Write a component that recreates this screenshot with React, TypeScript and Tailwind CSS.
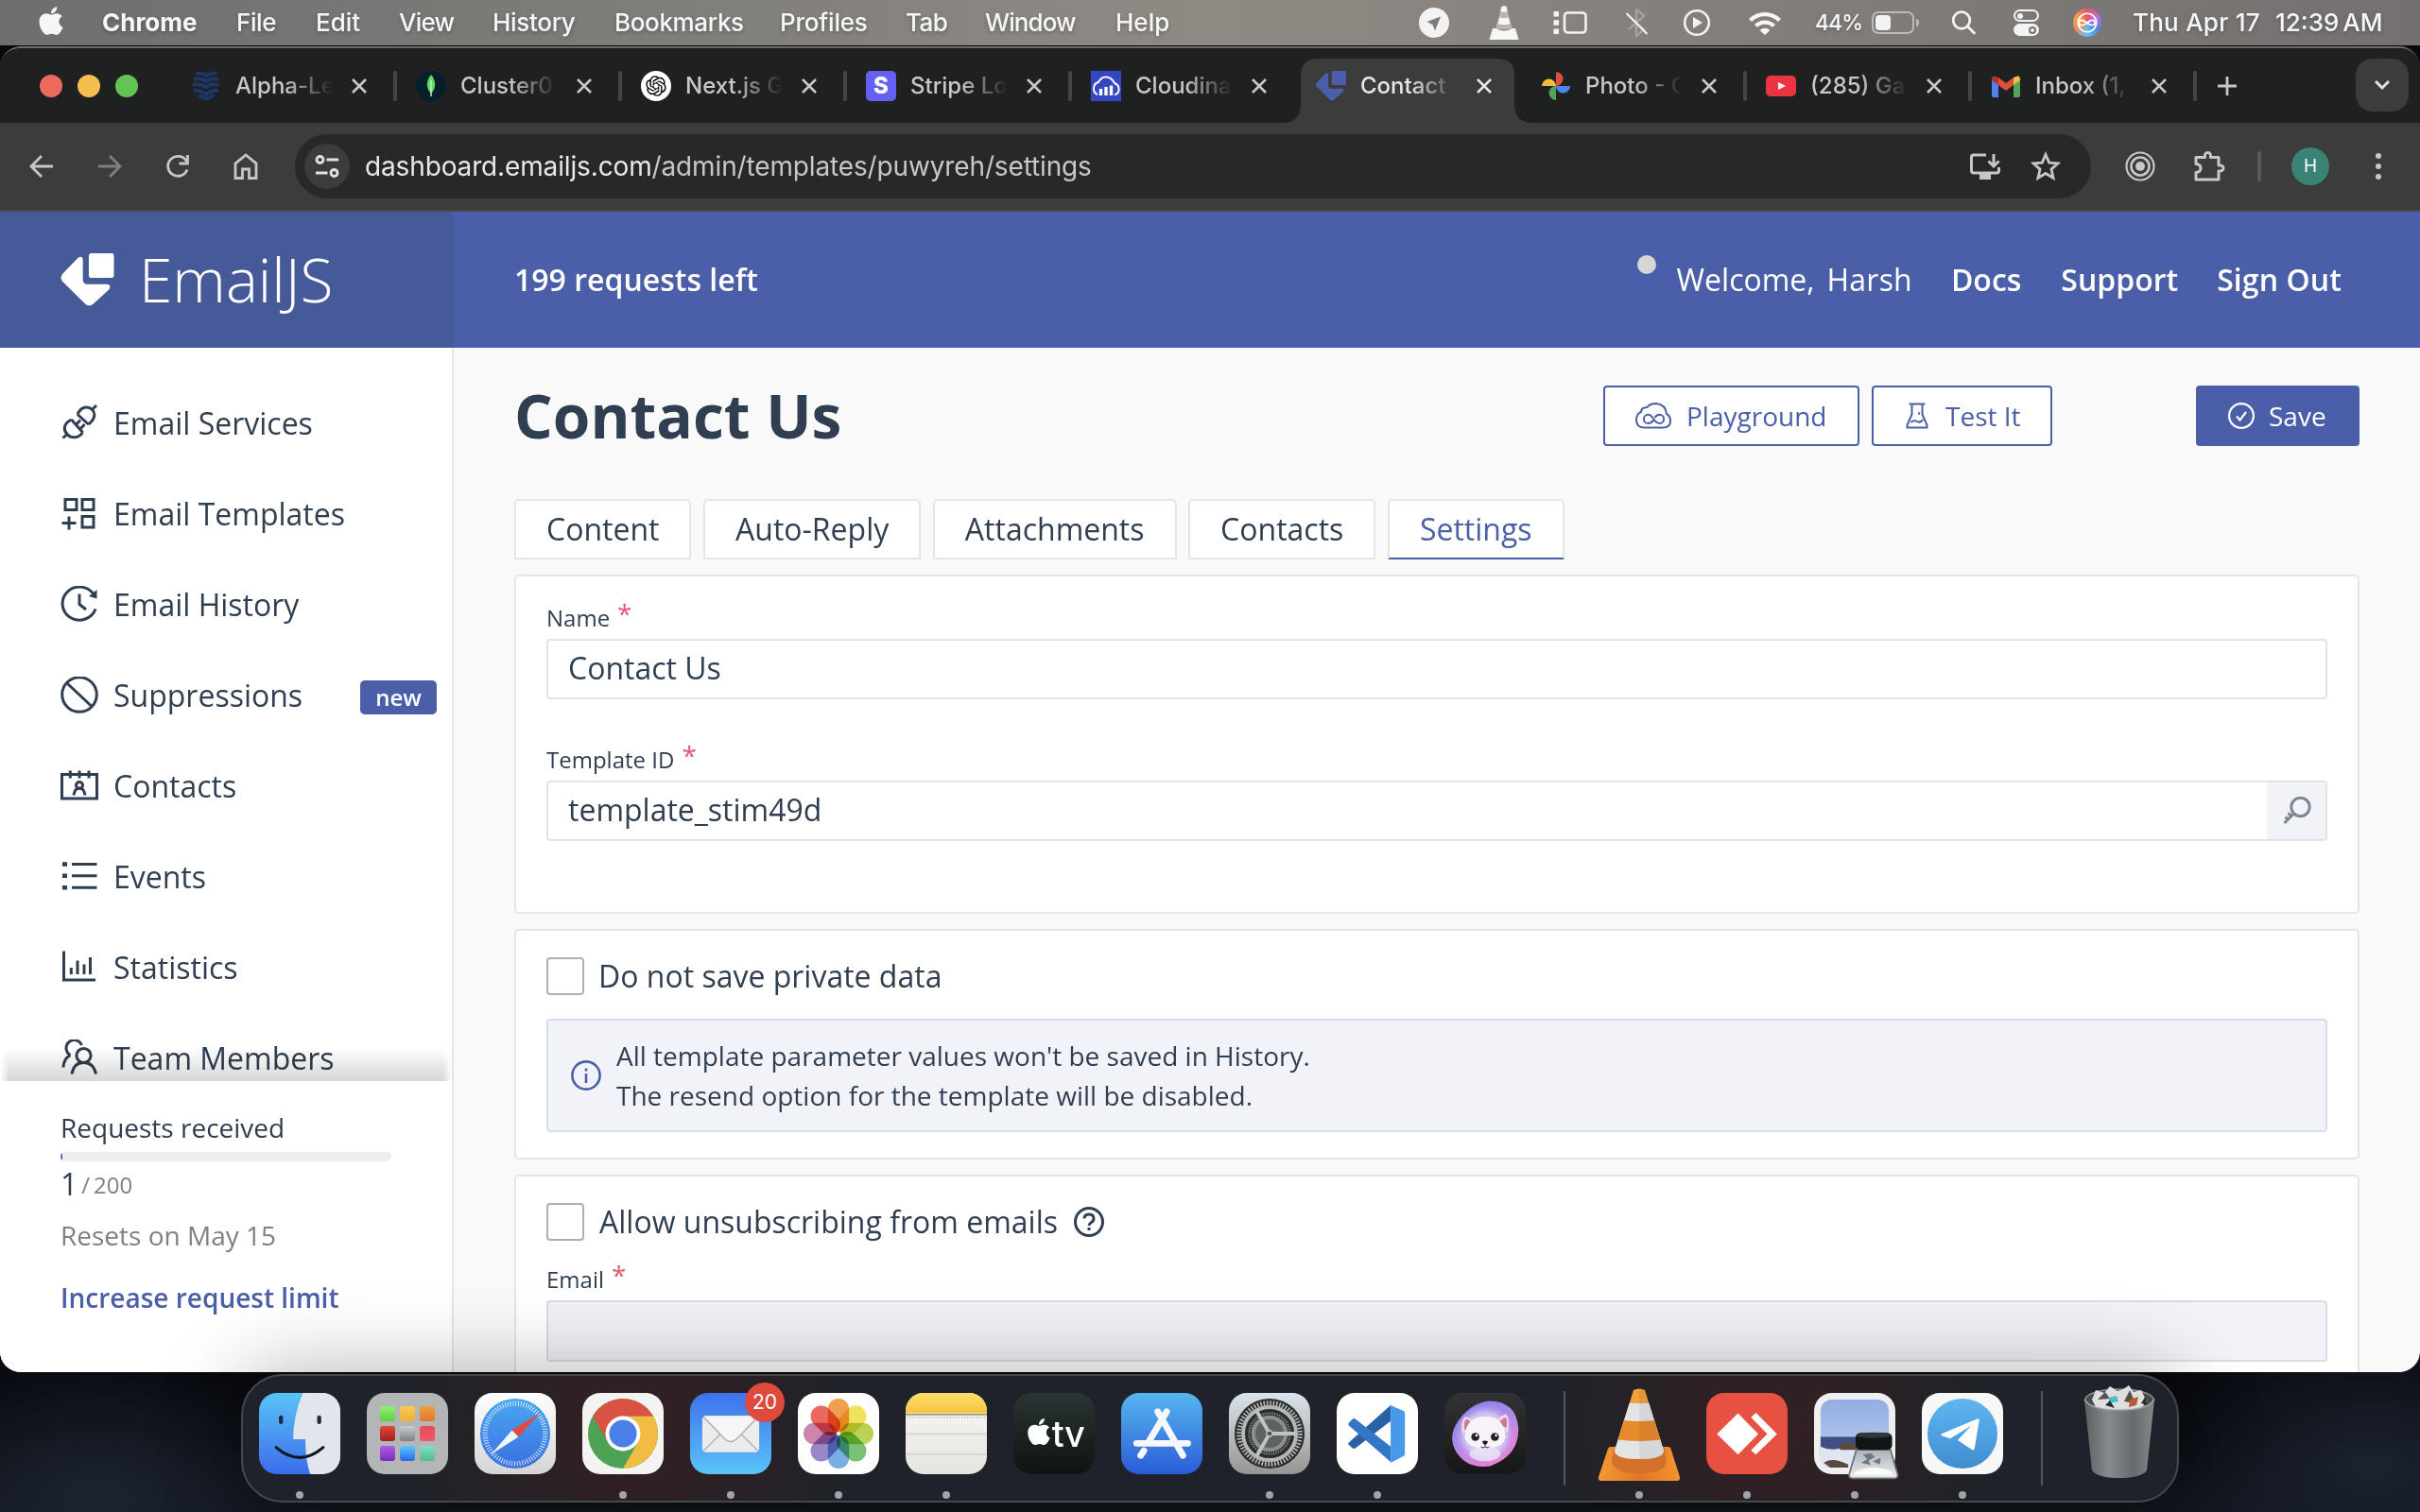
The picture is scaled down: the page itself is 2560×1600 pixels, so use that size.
import React from "react";
import type { ReactNode } from "react";
import { FaApple } from "react-icons/fa";
import { RiOpenaiFill } from "react-icons/ri";

/* ---------- macOS menu bar ---------- */

const menus = [
  { label: "Chrome", cls: "w-[142px] font-bold" },
  { label: "File", cls: "w-[84px] tracking-[-0.4px]" },
  { label: "Edit", cls: "w-[88px]" },
  { label: "View", cls: "w-[99px] tracking-[-0.8px]" },
  { label: "History", cls: "w-[129px] tracking-[-0.3px]" },
  { label: "Bookmarks", cls: "w-[175px] tracking-[-0.35px]" },
  { label: "Profiles", cls: "w-[133px] tracking-[-0.2px]" },
  { label: "Tab", cls: "w-[84px] tracking-[-0.5px]" },
  { label: "Window", cls: "w-[138px] tracking-[-0.9px]" },
  { label: "Help", cls: "w-[80px]" },
];

function MenuBar() {
  return (
    <header className="flex h-[48px] shrink-0 items-center bg-linear-to-r from-[#6c6f6e] via-[#908a84] to-[#73706f] font-['Inter',sans-serif] text-[26px] leading-[48px] font-medium text-[#f6f6f6] [text-shadow:0_2px_4px_rgba(0,0,0,0.25)]">
      <div className="flex w-[108px] justify-center pb-1">
        <FaApple className="size-[34px]" />
      </div>
      {menus.map((m) => (
        <span key={m.label} className={`shrink-0 pb-px whitespace-nowrap ${m.cls}`}>
          {m.label}
        </span>
      ))}
      <div className="ml-auto flex h-full items-center">
        <div className="flex w-[74px] justify-center">
          <svg className="size-[32px]" viewBox="0 0 32 32">
            <circle cx="16" cy="16" r="16" fill="#f3f3f3" />
            <path d="M23 9.500 8.500 15l6 3.200 2.600 6.300z" fill="#817c77" />
          </svg>
        </div>
        <div className="flex w-[74px] justify-center">
          <svg className="h-[36px] w-[32px]" viewBox="0 0 32 36">
            <path d="M13.500 1q2.500-1.500 5 0L25 25H7z" fill="#b9b5b1" />
            <path d="M13.500 1q2.500-1.500 5 0l1.300 5q-3.800 1.500-7.600 0zM11.300 12.500q4.700 1.600 9.400 0l1.700 6.500q-6.400 2.500-12.800 0zM4 24h3q9 5 18 0h3l3.500 12H.5z" fill="#f6f6f6" />
          </svg>
        </div>
        <div className="flex w-[66px] justify-center">
          <svg className="h-[24px] w-[36px]" viewBox="0 0 36 24">
            <rect x="12" y="1.500" width="22.500" height="21" rx="3.500" fill="none" stroke="#f3f3f3" strokeWidth="2.600" />
            <path d="M.5 0h5.500v5.500H.5zM.5 9.200h5.500v5.500H.5zM.5 18.500h5.500V24H.5z" fill="#f3f3f3" />
          </svg>
        </div>
        <div className="flex w-[74px] justify-center">
          <svg className="h-[30px] w-[24px]" viewBox="0 0 24 30" fill="none">
            <path d="M4 8l16 14-8 7V1l8 7L4 22" stroke="#a8a49f" strokeWidth="2.200" />
            <path d="M1.500 5l22 22" stroke="#f3f3f3" strokeWidth="2.200" />
          </svg>
        </div>
        <div className="flex w-[54px] justify-center">
          <svg className="size-[30px]" viewBox="0 0 30 30">
            <circle cx="15" cy="15" r="12.800" fill="none" stroke="#f3f3f3" strokeWidth="2.600" />
            <path d="M11 9v12l10-6z" fill="#f3f3f3" />
          </svg>
        </div>
        <div className="flex w-[90px] justify-center pb-px">
          <svg className="h-[26px] w-[36px]" viewBox="0 0 36 26" fill="none" stroke="#f6f6f6" strokeWidth="4.400">
            <path d="M2.500 10.500a22 22 0 0 1 31 0" />
            <path d="M8.500 16.500a13.500 13.500 0 0 1 19 0" />
            <path d="M12.500 21l5.500 5 5.500-5q-5.500-4.500-11 0z" fill="#f6f6f6" stroke="none" />
          </svg>
        </div>
        <span className="ml-[8px] w-[60px] text-[23px] tracking-[-1px] whitespace-nowrap">44%</span>
        <div className="flex w-[50px] items-center">
          <div className="flex h-[24px] w-[45px] items-center rounded-[7px] border-2 border-[#bdb9b6] pl-[2px]">
            <div className="h-[16px] w-[16px] rounded-[4px] bg-[#f3f3f3]" />
          </div>
          <div className="ml-[2px] h-[8px] w-[3px] rounded-r bg-[#bdb9b6]" />
        </div>
        <div className="flex w-[94px] justify-center">
          <svg className="size-[26px]" viewBox="0 0 26 26" fill="none" stroke="#f3f3f3" strokeWidth="2.800" strokeLinecap="round">
            <circle cx="11" cy="10.500" r="8.800" />
            <path d="M17.500 17l7 7" />
          </svg>
        </div>
        <div className="flex w-[38px] flex-col items-center gap-[2px]">
          <div className="flex h-[13px] w-[27px] items-center rounded-full border-2 border-[#f3f3f3] pl-[2px]">
            <div className="size-[6px] rounded-full bg-[#f3f3f3]" />
          </div>
          <div className="flex h-[13px] w-[27px] items-center justify-end rounded-full bg-[#f3f3f3] pr-[3px]">
            <div className="size-[8px] rounded-full border-2 border-[#77736f]" />
          </div>
        </div>
        <div className="flex w-[92px] justify-center">
          <div className="flex size-[30px] items-center justify-center rounded-full bg-[conic-gradient(#e8506a,#c46bd8,#4f7fe8,#59c6ee,#f08a5a,#f2a050,#e8506a)]">
            <svg className="size-[26px]" viewBox="0 0 24 24" fill="none" stroke="#fff" strokeWidth="1.600">
              <circle cx="12" cy="12" r="9" />
              <path d="M6 9.500c4 0 7 5 11 5a2.500 2.500 0 0 0 0-5c-4 0-6 5-10 5a2.500 2.500 0 0 1-1-5z" />
            </svg>
          </div>
        </div>
        <span className="ml-[2px] w-[151px] tracking-[0.25px] whitespace-nowrap">Thu Apr 17</span>
        <span className="w-[153px] whitespace-nowrap [word-spacing:-3px]">12:39 AM</span>
      </div>
    </header>
  );
}

/* ---------- Browser tabs ---------- */

const EmailJsMark = ({ className }: { className: string }) => (
  <svg className={className} viewBox="0 0 58 58" fill="currentColor">
    <path d="M33.500 0h22q2.500 0 2.500 2.500v22q0 2.500-2.500 2.500h-22q-3 0-3-3V3q0-3 3-3z" />
    <path d="M18.500 5.200q5-3.500 5.500 1.800v22.500q.5 4 4.500 4.500h21.500q5.500.5 2.800 5.500L35.500 55.500q-4.500 4-9 0L1.800 31q-3.600-4.500 0-8.500z" />
  </svg>
);

const AlphaIcon = () => (
  <svg className="h-[30px] w-[32px]" viewBox="0 0 32 30" fill="none" stroke="#1d3766" strokeWidth="4">
    <path d="M5 2q5-2 11 2 6-4 11-2M3 8q7-2 13 2 6-4 13-2M2 14q8-2 14 2 6-4 14-2M3 20q7-1 13 4 6-5 13-4M8 25l8 4 8-4" />
  </svg>
);
const LeafIcon = () => (
  <div className="flex size-[32px] items-center justify-center rounded-full bg-[#061f2b]">
    <svg className="h-[24px] w-[14px]" viewBox="0 0 14 24">
      <path d="M7 0c5 6 6 14 0 20C1 14 2 6 7 0z" fill="#5fdc63" />
      <path d="M7 6v17" stroke="#b9f0c0" strokeWidth="1.500" />
    </svg>
  </div>
);
const OpenAiIcon = () => (
  <div className="flex size-[32px] items-center justify-center rounded-full bg-white">
    <RiOpenaiFill className="size-[26px] text-black" />
  </div>
);
const StripeIcon = () => (
  <div className="flex size-[32px] items-center justify-center rounded-[5px] bg-[#6460f4] text-[24px] font-extrabold text-white">S</div>
);
const CloudinaryIcon = () => (
  <div className="flex size-[32px] items-center justify-center bg-[#3448c5]">
    <svg className="h-[22px] w-[30px]" viewBox="0 0 30 22" fill="none" stroke="#fff" strokeWidth="2">
      <path d="M6 20Q1.500 18 2 13t5-6q3-6 8.500-5.500T24 8q5 2 4.500 7T24 20" />
      <path d="M9.500 14v7M15 12v9M20.500 10.500v10.500" strokeWidth="3.400" />
    </svg>
  </div>
);
const PhotosIcon = () => (
  <svg className="size-[30px]" viewBox="0 0 30 30">
    <path d="M15 0a7.500 7.500 0 0 1 0 15z" fill="#dc4f3f" />
    <path d="M30 15a7.500 7.500 0 0 1-15 0z" fill="#4f83ee" />
    <path d="M15 30a7.500 7.500 0 0 1 0-15z" fill="#53a557" />
    <path d="M0 15a7.500 7.500 0 0 1 15 0z" fill="#f2bc42" />
  </svg>
);
const YoutubeIcon = () => (
  <svg className="h-[22px] w-[32px]" viewBox="0 0 32 22">
    <rect width="32" height="22" rx="5" fill="#ea3440" />
    <path d="M13 7v8l8-4z" fill="#fff" />
  </svg>
);
const GmailIcon = () => (
  <svg className="h-[23px] w-[30px]" viewBox="0 0 30 23">
    <path d="M0 4l7 5v14H2q-2 0-2-2z" fill="#4f83ee" />
    <path d="M30 4l-7 5v14h5q2 0 2-2z" fill="#53a557" />
    <path d="M7 2l8 6 8-6v8l-8 6-8-6z" fill="#dc4f3f" />
    <path d="M0 4q0-6 7-2v8L0 5z" fill="#b93328" />
    <path d="M30 4q0-6-7-2v8l7-5z" fill="#f2bc42" />
  </svg>
);

type TabItem = { title: string; icon: ReactNode; active?: boolean; divider?: boolean };
const tabs: TabItem[] = [
  { title: "Alpha-Le", icon: <AlphaIcon />, divider: true },
  { title: "Cluster0", icon: <LeafIcon />, divider: true },
  { title: "Next.js G", icon: <OpenAiIcon />, divider: true },
  { title: "Stripe Lo", icon: <StripeIcon />, divider: true },
  { title: "Cloudina", icon: <CloudinaryIcon /> },
  { title: "Contact", icon: <EmailJsMark className="size-[32px] text-[#4a5fa7]" />, active: true },
  { title: "Photo - G", icon: <PhotosIcon />, divider: true },
  { title: "(285) Ga", icon: <YoutubeIcon />, divider: true },
  { title: "Inbox (1,", icon: <GmailIcon />, divider: true },
];

const Cross = () => (
  <svg className="size-[18px]" viewBox="0 0 18 18" stroke="currentColor" strokeWidth="2.600" fill="none">
    <path d="M2 2l14 14M16 2L2 16" />
  </svg>
);

function Tab({ title, icon, active, divider }: TabItem) {
  return (
    <div className="relative flex h-[68px] w-[238px] shrink-0 pb-[10px]">
      {active && (
        <svg className="absolute -left-[14px] top-0 h-[68px] w-[266px]" viewBox="0 0 266 68" fill="#3c3c3c">
          <path d="M0 68q20 0 20-20V18Q20 0 38 0h190q18 0 18 18v30q0 20 20 20z" />
        </svg>
      )}
      <div className="relative flex w-full items-center">
        <div className="ml-[21px] flex w-[34px] justify-center">{icon}</div>
        <span
          className={`ml-[14px] w-[105px] overflow-hidden whitespace-nowrap mask-r-from-50% mask-r-to-98% ${active ? "text-[#e6e6e6]" : "text-[#c7c8c7]"}`}
        >
          {title}
        </span>
        <div className={`ml-[17px] ${active ? "text-[#e6e6e6]" : "text-[#c7c8c7]"}`}>
          <Cross />
        </div>
        {divider && <div className="ml-auto h-[32px] w-[4px] translate-x-[2px] rounded-full bg-[#444645]" />}
      </div>
    </div>
  );
}

function TabStrip() {
  return (
    <div className="flex h-[79px] shrink-0 items-end bg-[#1f2120] text-[24px] font-medium">
      <div className="flex h-[68px] w-[180px] items-center gap-[16px] pb-[10px] pl-[42px]">
        <div className="size-[24px] rounded-full bg-[#ec6a5e]" />
        <div className="size-[24px] rounded-full bg-[#f4bf4f]" />
        <div className="size-[24px] rounded-full bg-[#61c554]" />
      </div>
      {tabs.map((t) => (
        <Tab key={t.title} {...t} />
      ))}
      <div className="flex h-[68px] w-[68px] items-center justify-center pb-[10px]">
        <svg className="size-[22px]" viewBox="0 0 22 22" stroke="#c7c8c7" strokeWidth="2.800">
          <path d="M11 1v20M1 11h20" />
        </svg>
      </div>
      <div className="mr-[12px] mb-[12px] ml-auto flex h-[56px] w-[56px] items-center justify-center rounded-[18px] bg-[#3c3c3c]">
        <svg className="h-[12px] w-[18px]" viewBox="0 0 18 12" stroke="#e3e3e3" strokeWidth="3" fill="none">
          <path d="M2 2l7 7 7-7" />
        </svg>
      </div>
    </div>
  );
}

/* ---------- Browser toolbar ---------- */

function Toolbar() {
  return (
    <div className="flex h-[94px] shrink-0 items-center border-b-2 border-[#484848] bg-[#3c3c3c] text-[#c7c7c7]">
      <div className="flex w-[88px] justify-center">
        <svg className="size-[26px]" viewBox="0 0 26 26" fill="none" stroke="currentColor" strokeWidth="2.800">
          <path d="M25 13H2.500M13 2L2 13l11 11" />
        </svg>
      </div>
      <div className="flex w-[56px] justify-center text-[#7f7f7f]">
        <svg className="size-[26px]" viewBox="0 0 26 26" fill="none" stroke="currentColor" strokeWidth="2.800">
          <path d="M1 13h22.500M13 2l11 11-11 11" />
        </svg>
      </div>
      <div className="flex w-[88px] justify-center">
        <svg className="size-[26px]" viewBox="0 0 26 26" fill="none" stroke="currentColor" strokeWidth="2.800">
          <path d="M23 16.500A10.500 10.500 0 1 1 22.500 8" />
          <path d="M23.500 1v9h-9" />
        </svg>
      </div>
      <div className="flex w-[56px] justify-center">
        <svg className="h-[28px] w-[26px]" viewBox="0 0 26 28" fill="none" stroke="currentColor" strokeWidth="2.800">
          <path d="M2 26.500V11L13 2l11 9v15.500h-7.500V17h-7v9.500z" />
        </svg>
      </div>
      <div className="ml-[24px] flex h-[68px] w-[1900px] items-center rounded-full bg-[#282828]">
        <div className="ml-[10px] flex size-[48px] items-center justify-center rounded-full bg-[#3c3c3c]">
          <svg className="size-[26px]" viewBox="0 0 26 26" fill="none" stroke="#e3e3e3" strokeWidth="2.800">
            <circle cx="5.500" cy="6" r="3.500" />
            <path d="M12.500 6H25M1 20h12.500" />
            <circle cx="20.500" cy="20" r="3.500" />
          </svg>
        </div>
        <span className="ml-[16px] text-[28px] tracking-[-0.14px] whitespace-nowrap text-[#c7c7c7]">
          <span className="text-[#e8e8e8]">dashboard.emailjs.com</span>/admin/templates/puwyreh/settings
        </span>
        <div className="mr-[32px] ml-auto flex items-center gap-[31px]">
          <svg className="h-[30px] w-[34px]" viewBox="0 0 34 30" fill="none" stroke="currentColor" strokeWidth="3">
            <path d="M18 3H5Q2.500 3 2.500 5.500v14Q2.500 22 5 22h24q2.500 0 2.500-2.500V16M26 2v12M20.500 9.500L26 15l5.500-5.500" />
            <path d="M11 26h12" strokeWidth="6" />
          </svg>
          <svg className="size-[32px]" viewBox="0 0 32 32" fill="none" stroke="currentColor" strokeWidth="2.800">
            <path d="M16 3.500l3.700 8.600 9.300.8-7 6.200 2.100 9.200-8.100-4.800-8.100 4.800L10 19.100l-7-6.200 9.300-.8z" />
          </svg>
        </div>
      </div>
      <div className="ml-[14px] flex w-[76px] justify-center">
        <svg className="size-[32px]" viewBox="0 0 32 32" fill="none" stroke="currentColor">
          <circle cx="16" cy="16" r="14.500" strokeWidth="2.200" />
          <circle cx="16" cy="16" r="9.500" strokeWidth="2.600" />
          <circle cx="16" cy="16" r="5" fill="currentColor" stroke="none" />
        </svg>
      </div>
      <div className="flex w-[70px] justify-center">
        <svg className="size-[34px]" viewBox="0 0 34 34" fill="none" stroke="currentColor" strokeWidth="3">
          <path d="M3 7.500h9.500Q12 2.500 15.500 2.500T18.500 7.500H27v8.500q5-.5 5 3t-5 3V31H3v-7.500q5-.5 5-4.500t-5-4.500z" strokeLinejoin="round" />
        </svg>
      </div>
      <div className="ml-[16px] h-[32px] w-[4px] rounded-full bg-[#5a5a5a]" />
      <div className="ml-[32px] flex size-[40px] items-center justify-center rounded-full bg-[#3b8475] text-[19px] text-white">H</div>
      <div className="ml-[49px] flex flex-col gap-[5px]">
        <div className="size-[6px] rounded-full bg-[#c7c7c7]" />
        <div className="size-[6px] rounded-full bg-[#c7c7c7]" />
        <div className="size-[6px] rounded-full bg-[#c7c7c7]" />
      </div>
    </div>
  );
}

/* ---------- EmailJS dashboard ---------- */

function SiteHeader() {
  return (
    <div className="flex h-[144px] shrink-0 bg-[#4a5fa7] text-[32px] text-white">
      <div className="flex w-[480px] items-center bg-[#465a99] pl-[63px]">
        <EmailJsMark className="h-[56px] w-[59px]" />
        <span className="ml-[25px] text-[64px] leading-[80px] font-light">EmailJS</span>
      </div>
      <div className="flex flex-1 items-center pr-[83px] pl-[64px]">
        <span className="font-semibold">199 requests left</span>
        <div className="mb-[32px] ml-auto size-[20px] rounded-full bg-[#d6d6d6]" />
        <span className="ml-[22px]">Welcome,</span>
        <span className="ml-[13px] tracking-[0.2px]">Harsh</span>
        <span className="ml-[41px] font-semibold">Docs</span>
        <span className="ml-[42px] font-semibold">Support</span>
        <span className="ml-[41px] font-semibold tracking-[0.1px]">Sign Out</span>
      </div>
    </div>
  );
}

const navItems: { label: string; icon: ReactNode; badge?: string }[] = [
  {
    label: "Email Services",
    icon: (
      <>
        <path d="M11.500 16L23.500 29.500M11.500 16C2.500 21 3 27 7 31.500 11 36 19 36.500 23.500 29.500M2.500 35.500L7 31.500M16 22l5-5.500M20.500 26.500l5-5.500" />
        <path d="M18 10.500L29.500 21M18 10.500C21.500 2.500 29 1 33.500 5.500 38 10 35.500 17 29.500 21M33.500 5.500L38 1" />
      </>
    ),
  },
  { label: "Email Templates", icon: <path d="M5 4.500h12v11H5zM23 4.500h12v11H23zM23 22.500h12v11.500H23zM9 22.500v14M1.500 29.500h15" /> },
  {
    label: "Email History",
    icon: (
      <>
        <path d="M36 10.500A18 17.500 0 1 0 37 24.500M20 8.500v11l7 5.500" />
        <path d="M38.500 4v9.500L30 11z" fill="currentColor" stroke="none" />
      </>
    ),
  },
  {
    label: "Suppressions",
    icon: (
      <>
        <circle cx="20" cy="19" r="18.300" />
        <path d="M7 7l26 24.500" />
      </>
    ),
    badge: "new",
  },
  {
    label: "Contacts",
    icon: (
      <>
        <path d="M1.500 7.500h37v25.500H1.500zM10.300 3.500v8M20 3.500v8M30 3.500v8" />
        <path d="M14 29.500q1-7.500 6-7.500t6 7.500" />
        <circle cx="20" cy="19" r="3.500" />
      </>
    ),
  },
  {
    label: "Events",
    icon: (
      <>
        <path d="M12 6.500h26.500M12 18.700h26.500M12 31.300h26.500" />
        <path d="M2 6.500h5M2 18.700h5M2 31.300h5" strokeWidth="4.500" />
      </>
    ),
  },
  { label: "Statistics", icon: <path d="M3.500 2.500v30.500H37M11.300 20v7M18 12.500V27M25 16.500V27M31.500 9v18" /> },
  {
    label: "Team Members",
    icon: (
      <>
        <circle cx="24.500" cy="17" r="7.600" />
        <path d="M12 36.500Q14 24.500 24.500 24.500T37.500 36.500M22.500 6A8.500 8.500 0 1 0 10.500 16.500M3 29.500Q3.500 20 10.500 16.500" />
      </>
    ),
  },
];

function Sidebar() {
  return (
    <aside className="flex w-[480px] shrink-0 flex-col border-r-2 border-[#e5e5e5] bg-white text-[#2f3e50]">
      <nav className="h-[776px] shrink-0 overflow-hidden pt-[32px] text-[32px]">
        {navItems.map((n) => (
          <div key={n.label} className="flex h-[96px] items-center pr-[16px] pl-[64px]">
            <svg className="size-[40px]" viewBox="0 0 40 40" fill="none" stroke="currentColor" strokeWidth="3">
              {n.icon}
            </svg>
            <span className="ml-[16px]">{n.label}</span>
            {n.badge && (
              <span className="mt-[4px] ml-auto flex h-[36px] w-[81px] items-center justify-center rounded-[5px] bg-[#4a5fa7] text-[24px] font-semibold text-white">
                {n.badge}
              </span>
            )}
          </div>
        ))}
      </nav>
      <div className="relative flex flex-1 flex-col bg-white pl-[64px] text-[28px] leading-[40px]">
        <div className="absolute inset-x-0 -top-[36px] h-[36px] bg-linear-to-t from-black/16 to-transparent mask-x-from-98%" />
        <div className="mt-[29px]">Requests received</div>
        <div className="mt-[6px] h-[10px] w-[350px] overflow-hidden rounded-full bg-[#eeeeee]">
          <div className="h-full w-[2px] bg-[#4a5fa7]" />
        </div>
        <div className="mt-[4px] flex items-baseline text-[32px] leading-[40px]">
          1
          <span className="relative -top-[2px] ml-[4px] text-[24px] text-[#808080]">
            /<span className="ml-[4px]">200</span>
          </span>
        </div>
        <div className="mt-[11px] text-[#808080]">Resets on May 15</div>
        <div className="mt-[26px] font-semibold text-[#4a5fa7]">Increase request limit</div>
      </div>
    </aside>
  );
}

const Required = () => <span className="relative -top-[3px] ml-[8px] text-[28px] leading-none text-[#e4586e]">*</span>;

function Field({ label, value, action, className = "" }: { label: string; value: string; action?: ReactNode; className?: string }) {
  return (
    <div className={className}>
      <div className="h-[32px] text-[24px] leading-[32px]">
        {label}
        <Required />
      </div>
      <div className="mt-[6px] flex h-[64px] items-stretch overflow-hidden rounded-[4px] border-2 border-[#e3e3e3] bg-white">
        <span className="flex flex-1 items-center pb-[2px] pl-[21px] text-[32px]">{value}</span>
        {action}
      </div>
    </div>
  );
}

const Checkbox = () => <div className="size-[40px] rounded-[4px] border-2 border-[#b0b0b0] bg-white" />;

const pageTabs = ["Content", "Auto-Reply", "Attachments", "Contacts", "Settings"];

function Main() {
  return (
    <main className="flex min-w-0 flex-1 flex-col bg-[#f9f9f9] px-[64px] text-[#2f3e50]">
      <div className="mt-[40px] flex h-[64px] items-center text-[28px]">
        <h1 className="text-[64px] leading-[64px] font-bold whitespace-nowrap">Contact Us</h1>
        <div className="ml-auto flex h-[64px] w-[271px] items-center rounded-[4px] border-2 border-[#4a5fa7] bg-white pl-[32px] text-[#4a5fa7]">
          <svg className="h-[28px] w-[38px]" viewBox="0 0 38 28" fill="none" stroke="currentColor" strokeWidth="2">
            <path d="M9 26.500Q1 26 1 18.500 1.500 11 6 10q0-5 6.500-5Q15 1 22 1q10 1 11 11 4 2 4 7.500 0 6.500-7 7z" />
            <path d="M20.500 17.500c-3 3.500-5 4.500-7 4.500a4.600 4.600 0 0 1 0-9.200c5.500 0 6 9.200 12 9.200a4.600 4.600 0 0 0 0-9.200c-2 0-3.500 1-5 3" />
          </svg>
          <span className="ml-[16px]">Playground</span>
        </div>
        <div className="ml-[13px] flex h-[64px] w-[191px] items-center rounded-[4px] border-2 border-[#4a5fa7] bg-white pl-[34px] text-[#4a5fa7]">
          <svg className="h-[28px] w-[24px]" viewBox="0 0 24 28" fill="none" stroke="currentColor" strokeWidth="2">
            <path d="M3.500 1.500h17M6.500 1.500v11L1.500 24v2.500h21V24l-5-11.500v-11M5.500 21q3-3 6.500-1t6-2" />
            <path d="M13 11.500h2" strokeWidth="2.500" />
          </svg>
          <span className="ml-[18px]">Test It</span>
        </div>
        <div className="ml-[152px] flex h-[64px] w-[173px] items-center rounded-[4px] bg-[#4a5fa7] pl-[34px] text-white">
          <svg className="size-[28px]" viewBox="0 0 28 28" fill="none" stroke="currentColor" strokeWidth="2.200">
            <circle cx="14" cy="14" r="12.900" />
            <path d="M9 14.500l3.500 4L19 10" />
          </svg>
          <span className="ml-[15px]">Save</span>
        </div>
      </div>

      <div className="mt-[56px] flex gap-[12.6px] text-[32px]">
        {pageTabs.map((t) => (
          <div
            key={t}
            className={`flex h-[64px] items-center rounded-t-[5px] border-2 bg-white px-[32px] ${
              t === "Settings" ? "border-[#e5e5e5] border-b-[#4a5fa7] text-[#4a5fa7]" : "border-[#e5e5e5]"
            }`}
          >
            {t}
          </div>
        ))}
      </div>

      <section className="mt-[16px] h-[359px] shrink-0 rounded-[5px] border-2 border-[#e5e5e5] bg-white px-[32px] pt-[28px]">
        <Field label="Name" value="Contact Us" />
        <Field
          className="mt-[48px]"
          label="Template ID"
          value="template_stim49d"
          action={
            <div className="-mr-[2px] flex w-[64px] items-center justify-center bg-[#f2f3f9] text-[#7d8894]">
              <svg className="size-[30px]" viewBox="0 0 30 30" fill="none" stroke="currentColor" strokeWidth="3">
                <circle cx="18.500" cy="11" r="9.700" />
                <path d="M11.500 18L1.500 28M5.500 17.500l4 3.500M2.500 21.500l3.500 3" />
              </svg>
            </div>
          }
        />
      </section>

      <section className="mt-[16px] h-[244px] shrink-0 rounded-[5px] border-2 border-[#e5e5e5] bg-white px-[32px] pt-[28px]">
        <div className="flex h-[40px] items-center text-[32px]">
          <Checkbox />
          <span className="ml-[15px] pb-px">Do not save private data</span>
        </div>
        <div className="mt-[25px] flex h-[120px] items-center rounded-[4px] border-2 border-[#d6deec] bg-[#f2f3f9] pl-[24px]">
          <svg className="size-[32px]" viewBox="0 0 32 32" fill="none" stroke="#4a5fa7" strokeWidth="2.600">
            <circle cx="16" cy="16" r="14.600" />
            <path d="M16 14v10M16 8.500v3" />
          </svg>
          <p className="ml-[16px] text-[28px] leading-[42px]">
            All template parameter values won&apos;t be saved in History.
            <br />
            The resend option for the template will be disabled.
          </p>
        </div>
      </section>

      <section className="mt-[16px] h-[300px] shrink-0 rounded-[5px] border-2 border-[#e5e5e5] bg-white px-[32px] pt-[28px]">
        <div className="flex h-[40px] items-center text-[32px]">
          <Checkbox />
          <span className="ml-[16px]">Allow unsubscribing from emails</span>
          <svg className="ml-[17px] size-[32px]" viewBox="0 0 32 32" fill="none" stroke="currentColor" strokeWidth="3">
            <circle cx="16" cy="16" r="14.500" />
            <path d="M11 12.500Q11 8 16 8t5 4.500q0 2.500-2.500 4T16 20M16 22v3" />
          </svg>
        </div>
        <div className="mt-[25px] h-[32px] text-[24px] leading-[32px]">
          Email
          <Required />
        </div>
        <div className="mt-[6px] h-[65px] rounded-[4px] border-2 border-[#dcdce0] bg-[#f2f3f9]" />
      </section>
    </main>
  );
}

/* ---------- Dock ---------- */

const Finder = () => (
  <svg className="size-[86px] rounded-[19px]" viewBox="0 0 100 100">
    <defs>
      <linearGradient id="fd" x2="0" y2="1"><stop stopColor="#5ac4f6" /><stop offset="1" stopColor="#3c6cec" /></linearGradient>
    </defs>
    <rect width="100" height="100" fill="url(#fd)" />
    <path d="M54 0Q42 28 42 57h15q0 26 6 43h37V0z" fill="#e1e5ec" />
    <path d="M27 30v6M74 30v6" stroke="#1d2a3d" strokeWidth="5" strokeLinecap="round" />
    <path d="M21 67q29 25 58 0" stroke="#10151e" strokeWidth="3.500" fill="none" strokeLinecap="round" />
  </svg>
);

const launchColors = [
  "bg-linear-to-b from-[#93ee6b] to-[#5fce45]",
  "bg-linear-to-b from-[#f7cd4d] to-[#efae3c]",
  "bg-linear-to-b from-[#f0a03c] to-[#e0762f]",
  "bg-linear-to-b from-[#e5473a] to-[#a32018]",
  "bg-linear-to-b from-[#c9d0d4] to-[#7d7f80]",
  "bg-linear-to-b from-[#f0475a] to-[#e85b66]",
  "bg-linear-to-b from-[#b45be2] to-[#7530b8]",
  "bg-linear-to-b from-[#5bc8f8] to-[#2f66e8]",
  "bg-linear-to-b from-[#7fe0cd] to-[#55b987]",
];
const Launchpad = () => (
  <div className="grid size-[86px] grid-cols-[16px_16px_16px] content-center justify-center gap-[5px] rounded-[19px] bg-[#b4b5b7]">
    {launchColors.map((c) => (
      <div key={c} className={`size-[16px] rounded-[3px] ${c}`} />
    ))}
  </div>
);

const Safari = () => (
  <svg className="size-[86px] rounded-[19px]" viewBox="0 0 100 100">
    <defs>
      <linearGradient id="sfb" x2="0" y2="1"><stop stopColor="#fff" /><stop offset="1" stopColor="#d5d5d5" /></linearGradient>
      <linearGradient id="sfc" x2="0" y2="1"><stop stopColor="#4aa7ef" /><stop offset="1" stopColor="#3b6fe2" /></linearGradient>
    </defs>
    <rect width="100" height="100" fill="url(#sfb)" />
    <circle cx="50" cy="50" r="43" fill="url(#sfc)" />
    <circle cx="50" cy="50" r="37" fill="none" stroke="#dcebfb" strokeWidth="6" strokeDasharray="1.100 2.129" />
    <path d="M80 25L54 54l-8-8z" fill="#e5473a" />
    <path d="M20 76l26-30 8 8z" fill="#f4f5f6" />
  </svg>
);

const Chrome = () => (
  <svg className="size-[86px] rounded-[19px]" viewBox="0 0 100 100">
    <rect width="100" height="100" fill="#f3f3f2" />
    <circle cx="50" cy="50" r="43" fill="#4ea255" />
    <path d="M50 50V28.500h37.200A43 43 0 0 1 50 93l18.600-32.300z" fill="#f2bc42" />
    <path d="M13 28.500A43 43 0 0 1 87.200 28.500H50L31.400 60.700z" fill="#da5241" />
    <circle cx="50" cy="50" r="21.500" fill="#fff" />
    <circle cx="50" cy="50" r="17" fill="#4a7ee9" />
  </svg>
);

const Mail = () => (
  <div className="relative">
    <svg className="size-[86px] rounded-[19px]" viewBox="0 0 100 100">
      <defs>
        <linearGradient id="ml" x2="0" y2="1"><stop stopColor="#3d72ec" /><stop offset="1" stopColor="#5bc4f8" /></linearGradient>
      </defs>
      <rect width="100" height="100" fill="url(#ml)" />
      <rect x="15" y="28" width="70" height="45" rx="5" fill="#ececee" />
      <path d="M17 71l21-21M83 71L62 50" stroke="#b5b5b8" strokeWidth="1.800" />
      <path d="M16 29l27 28q7 6 14 0l27-28" fill="#f6f6f6" stroke="#b0b0b3" strokeWidth="1.800" />
    </svg>
    <div className="absolute -top-[11px] -right-[14px] flex size-[42px] items-center justify-center rounded-full bg-[#de4b3d] font-['Inter',sans-serif] text-[21px] text-white">
      20
    </div>
  </div>
);

const petals = [
  ["#f2963a", "rotate(0 50 50)"],
  ["#f3e04a", "rotate(45 50 50)"],
  ["#b5d146", "rotate(90 50 50)"],
  ["#6dbd68", "rotate(135 50 50)"],
  ["#6aa9e2", "rotate(180 50 50)"],
  ["#8f7cc4", "rotate(225 50 50)"],
  ["#c87aa6", "rotate(270 50 50)"],
  ["#ea584c", "rotate(315 50 50)"],
];
const Photos = () => (
  <svg className="size-[86px] rounded-[19px]" viewBox="0 0 100 100">
    <rect width="100" height="100" fill="#fdfdfd" />
    {petals.map(([fill, transform]) => (
      <rect key={fill} x="37" y="7" width="26" height="41" rx="13" fill={fill} transform={transform} className="opacity-90 mix-blend-multiply" />
    ))}
  </svg>
);

const Notes = () => (
  <svg className="size-[86px] rounded-[19px]" viewBox="0 0 100 100">
    <defs>
      <linearGradient id="nt" x2="0" y2="1"><stop stopColor="#fbdd6b" /><stop offset="1" stopColor="#f6c63f" /></linearGradient>
      <linearGradient id="np" x2="0" y2="1"><stop stopColor="#f8f8f6" /><stop offset="1" stopColor="#e6e4df" /></linearGradient>
    </defs>
    <rect width="100" height="100" fill="url(#np)" />
    <rect width="100" height="25" fill="url(#nt)" />
    <path d="M0 26.500h100" stroke="#a59a80" strokeWidth="2" />
    <path d="M2 30h96" stroke="#c4c2be" strokeWidth="2" strokeDasharray="1.500 2" />
    <path d="M0 50.500h100M0 75.500h100" stroke="#d3d3d6" strokeWidth="2" />
  </svg>
);

const AppleTv = () => (
  <div className="flex size-[86px] items-center justify-center rounded-[19px] bg-linear-to-b from-[#2b3533] to-[#0f1314] font-['Inter',sans-serif] text-white">
    <FaApple className="mb-[4px] size-[32px]" />
    <span className="-ml-[2px] text-[38px] leading-none font-medium tracking-[-0.5px]">tv</span>
  </div>
);

const AppStore = () => (
  <svg className="size-[86px] rounded-[19px]" viewBox="0 0 100 100">
    <defs>
      <linearGradient id="as" x2="0" y2="1"><stop stopColor="#56b6ef" /><stop offset="1" stopColor="#2b5cd8" /></linearGradient>
    </defs>
    <rect width="100" height="100" fill="url(#as)" />
    <g stroke="#f6f8fd" strokeWidth="8" strokeLinecap="round">
      <path d="M19 62h63M56 23L34 60M28 71l-4 6M45 23l31 54" />
    </g>
  </svg>
);

const Settings = () => (
  <svg className="size-[86px] rounded-[19px]" viewBox="0 0 100 100" fill="none">
    <defs>
      <linearGradient id="st" x2="0" y2="1"><stop stopColor="#dae4ea" /><stop offset="1" stopColor="#989591" /></linearGradient>
    </defs>
    <rect width="100" height="100" fill="url(#st)" />
    <circle cx="50" cy="50" r="43" fill="#2b2d2d" />
    <circle cx="50" cy="50" r="37.500" stroke="#b4b7b8" strokeWidth="6" strokeDasharray="1.900 2.027" />
    <circle cx="50" cy="50" r="32.500" stroke="#b4b8b8" strokeWidth="4.500" />
    <circle cx="50" cy="50" r="25" stroke="#85898a" strokeWidth="3" strokeDasharray="1.500 1.500" />
    <circle cx="50" cy="50" r="20" fill="#5f6262" stroke="#8b8f8f" strokeWidth="5" />
    <path d="M50 50h32M50 50L34 22M50 50L34 78" stroke="#c0c4c5" strokeWidth="4.500" />
    <circle cx="50" cy="50" r="3.500" fill="#505354" stroke="#c0c4c5" strokeWidth="1.500" />
  </svg>
);

const VsCode = () => (
  <svg className="size-[86px] rounded-[19px]" viewBox="0 0 100 100">
    <rect width="100" height="100" fill="#fff" />
    <path d="M66.400 15v19.500L23 68q-2 1-3.500 0L15 64q-1.500-1.500 0-3z" fill="#2762a6" />
    <path d="M15 40q-1.500-1.500 0-3l4.500-5q1.500-1 3.500 0l43.400 34V85z" fill="#3277c4" />
    <path d="M66.400 15l15.500 7q2 1 2 3v50q0 2-2 3l-15.500 8z" fill="#4899e8" />
  </svg>
);

const Puppy = () => (
  <svg className="size-[86px] rounded-[19px]" viewBox="0 0 100 100">
    <defs>
      <linearGradient id="pa" x2="0.6" y2="1"><stop stopColor="#7d7af2" /><stop offset="0.5" stopColor="#a98be8" /><stop offset="1" stopColor="#f07fd0" /></linearGradient>
      <radialGradient id="pb"><stop stopColor="#fff" /><stop offset="0.7" stopColor="#cfc4f0" stopOpacity="0.9" /><stop offset="1" stopColor="#b48af0" stopOpacity="0" /></radialGradient>
      <linearGradient id="pc" x2="0" y2="1"><stop stopColor="#333335" /><stop offset="1" stopColor="#161617" /></linearGradient>
    </defs>
    <rect width="100" height="100" fill="url(#pc)" />
    <path d="M55 10Q88 10 91 43q1 34-35 47-30 4-43-20-9-19 5-37Q34 12 55 10z" fill="url(#pa)" />
    <circle cx="50" cy="51" r="38" fill="url(#pb)" />
    <path d="M22 50q-3-14 3-21 12 3 16 12zM78 49q3-16-2-23-11 4-16 13z" fill="#e9d9e6" />
    <path d="M25 46q-2-10 2-14 7 3 9 9zM76 43q2-10-1-13-6 3-9 8z" fill="#c97a92" />
    <path d="M50 29q24 0 25 25-2 14-25 14T25 54q1-25 25-25z" fill="#f8f3f8" />
    <ellipse cx="50" cy="75" rx="19" ry="9" fill="#ece5f5" opacity="0.8" />
    <circle cx="38" cy="54" r="5" fill="#2a1a2c" />
    <circle cx="62" cy="54" r="5" fill="#2a1a2c" />
    <circle cx="39.500" cy="52.200" r="1.500" fill="#fff" />
    <circle cx="63.500" cy="52.200" r="1.500" fill="#fff" />
    <path d="M46.500 59.500q3.500-1.500 7 0-1 4-3.500 4.500-2.500-.5-3.500-4.500z" fill="#1c141c" />
    <path d="M45 66q2.500 2.500 5 0 2.500 2.500 5 0M50 64v3" stroke="#4c3540" strokeWidth="1.200" fill="none" />
  </svg>
);

const Vlc = () => (
  <svg className="mt-[2px] h-[98px] w-[88px]" viewBox="0 0 88 98">
    <defs>
      <linearGradient id="vb"><stop stopColor="#f59a35" /><stop offset="0.5" stopColor="#dd7727" /><stop offset="1" stopColor="#f49332" /></linearGradient>
      <clipPath id="vc"><path d="M38 2q6-3 12 0l20 64q0 9-26 9t-26-9z" /></clipPath>
    </defs>
    <path d="M14 62h61q2 0 2.500 2L87 94q.5 4-3 4H4q-3.500 0-3-4l10-30q.5-2 3-2z" fill="url(#vb)" />
    <path d="M17 64l-2 14q2 12 29 12t29-12l-2-14z" fill="#d2712a" />
    <g clipPath="url(#vc)">
      <rect width="88" height="98" fill="#f0a13a" />
      <path d="M0 13q44 6 88 0v80H0z" fill="#e3e4e6" />
      <path d="M0 28q44 14 88 0v22q-44 12-88 0z" fill="#e68a2c" />
      <path d="M44 0h26v80H44z" fill="#000" opacity="0.06" />
    </g>
  </svg>
);

const AnyDesk = () => (
  <svg className="size-[86px] rounded-[19px]" viewBox="0 0 100 100">
    <rect width="100" height="100" fill="#e65142" />
    <path d="M39 25l25 25.500L39 76 13 50.500z" fill="#fff" />
    <path d="M55 30l6-5.500 26 26L61 76l-6-5.500 20-20z" fill="#fff" />
  </svg>
);

const Preview = () => (
  <svg className="size-[86px] overflow-visible" viewBox="0 0 100 100">
    <defs>
      <linearGradient id="sky" x2="0" y2="1"><stop stopColor="#93aee4" /><stop offset="1" stopColor="#c3cff0" /></linearGradient>
      <linearGradient id="jar" x2="0" y2="1"><stop stopColor="#aeb2b6" /><stop offset="1" stopColor="#eceeef" /></linearGradient>
    </defs>
    <rect width="100" height="100" rx="22" fill="#efefef" />
    <rect x="8" y="8" width="84" height="84" rx="14" fill="url(#sky)" />
    <path d="M8 54h84v24q0 14-14 14H22Q8 92 8 78z" fill="#3f4f86" />
    <path d="M8 66q12 6 24 2t20-2v26H22Q8 92 8 80z" fill="#dfe6f2" />
    <path d="M30 64l10-4 12 4v6H32zM12 86q10-8 30 2v4H20z" fill="#594a3d" />
    <path d="M52 70h42l9 31q0 4-4 4H47q-4 0-4-4z" fill="url(#jar)" stroke="#6d7074" strokeWidth="2" />
    <path d="M60 76l10-2 5 5-8 4zM58 86l8-5 4 8zM72 84l10-4-1 8z" fill="#6d7988" />
    <path d="M50 97q24-10 46 0v4H50z" fill="#fbfbfb" />
    <rect x="51" y="49" width="45" height="21" rx="6" fill="#141517" />
    <ellipse cx="73.500" cy="52" rx="21" ry="3.500" fill="#34373a" />
  </svg>
);

const Telegram = () => (
  <svg className="size-[86px] rounded-[19px]" viewBox="0 0 100 100">
    <defs>
      <linearGradient id="tg" x2="0" y2="1"><stop stopColor="#60b6f1" /><stop offset="1" stopColor="#3f8dd0" /></linearGradient>
    </defs>
    <rect width="100" height="100" fill="#f7f7f7" />
    <circle cx="50" cy="50" r="43" fill="url(#tg)" />
    <path d="M68 32q3-1 2.500 2.500L65 68q-1 4-4 1.500L44 58l17-18-26 16-10-3q-3-1.500 0-3z" fill="#fff" />
  </svg>
);

const Trash = () => (
  <svg className="h-[100px] w-[78px]" viewBox="0 0 78 100">
    <defs>
      <linearGradient id="tr"><stop stopColor="#5f6365" /><stop offset="0.35" stopColor="#8b8e90" /><stop offset="0.7" stopColor="#6b6e70" /><stop offset="1" stopColor="#8a8d8f" /></linearGradient>
    </defs>
    <ellipse cx="39" cy="16" rx="36" ry="11" fill="#4a4d50" stroke="#8c8f91" strokeWidth="1.500" />
    <path d="M10 16l4-10 9 3 6-7 8 5 6-2 6-4 5 7 8-2 6 12-8 10H16z" fill="#dfdfdf" />
    <path d="M16 16l8-8 5 7zM44 18l6-12 6 14z" fill="#55504c" />
    <path d="M27 14l9-2 2 6-9 2z" fill="#49c0c9" />
    <path d="M50 16l9-3-2 9-8 2z" fill="#b95a34" />
    <path d="M24 22l5-5 5 8zM62 20l5-8 1 10z" fill="#2e2c2d" />
    <path d="M2 16q6 11 37 11t37-11l-8 75q-6 8-29 8t-29-8z" fill="url(#tr)" opacity="0.96" />
    <path d="M2 16q6 11 37 11t37-11" fill="none" stroke="#a3a6a8" strokeWidth="1.500" />
  </svg>
);

const dockMain = [
  { id: "finder", icon: <Finder />, open: true },
  { id: "launchpad", icon: <Launchpad />, open: false },
  { id: "safari", icon: <Safari />, open: false },
  { id: "chrome", icon: <Chrome />, open: true },
  { id: "mail", icon: <Mail />, open: true },
  { id: "photos", icon: <Photos />, open: true },
  { id: "notes", icon: <Notes />, open: true },
  { id: "tv", icon: <AppleTv />, open: false },
  { id: "store", icon: <AppStore />, open: false },
  { id: "settings", icon: <Settings />, open: true },
  { id: "code", icon: <VsCode />, open: true },
  { id: "puppy", icon: <Puppy />, open: false },
];
const dockExtra = [
  { id: "vlc", icon: <Vlc />, open: true },
  { id: "anydesk", icon: <AnyDesk />, open: true },
  { id: "preview", icon: <Preview />, open: true },
  { id: "telegram", icon: <Telegram />, open: true },
];

function DockItem({ icon, open }: { icon: ReactNode; open: boolean }) {
  return (
    <div className="flex w-[114px] flex-col items-center">
      <div className="flex h-[122px] items-center justify-center">{icon}</div>
      {open && <div className="size-[8px] rounded-full bg-[#a2a4ab]" />}
    </div>
  );
}

const DockDivider = () => <div className="mt-[16px] h-[100px] w-[2px] bg-[#54575d]" />;

function Dock() {
  return (
    <div className="relative mt-[2px] flex shrink-0 justify-center">
      <div className="flex h-[136px] w-[2050px] rounded-[44px] border-2 border-[#45484c] bg-[#1f2228] bg-[radial-gradient(circle_at_20%_40%,rgba(70,30,30,0.55),transparent_14%),radial-gradient(circle_at_79%_40%,rgba(70,30,30,0.55),transparent_14%)] pl-[3px] shadow-[0_0_90px_rgba(0,0,0,0.32)]">
        {dockMain.map((d) => (
          <DockItem key={d.id} icon={d.icon} open={d.open} />
        ))}
        <div className="ml-[26px]">
          <DockDivider />
        </div>
        <div className="ml-[21px] flex">
          {dockExtra.map((d) => (
            <DockItem key={d.id} icon={d.icon} open={d.open} />
          ))}
        </div>
        <div className="ml-[26px]">
          <DockDivider />
        </div>
        <div className="ml-[42px] pt-[9px]">
          <Trash />
        </div>
      </div>
    </div>
  );
}

export default function App() {
  return (
    <div className="flex h-[1600px] w-[2560px] flex-col overflow-hidden bg-[#07090e] bg-[radial-gradient(ellipse_at_4%_99%,#1d2430,transparent_7%),radial-gradient(ellipse_at_98%_97%,#1c232f,transparent_7%),linear-gradient(to_top,#10151c,#07090e_5%)]">
      <MenuBar />
      <div className="mt-px flex h-[1403px] shrink-0 flex-col overflow-hidden rounded-[22px] border-t-2 border-[#6a6c6b] bg-[#1f2120] font-['Inter',sans-serif]">
        <TabStrip />
        <Toolbar />
        <div className="flex min-h-0 flex-1 flex-col font-['Open_Sans',sans-serif]">
          <SiteHeader />
          <div className="flex min-h-0 flex-1 overflow-hidden">
            <Sidebar />
            <Main />
          </div>
        </div>
      </div>
      <Dock />
    </div>
  );
}
